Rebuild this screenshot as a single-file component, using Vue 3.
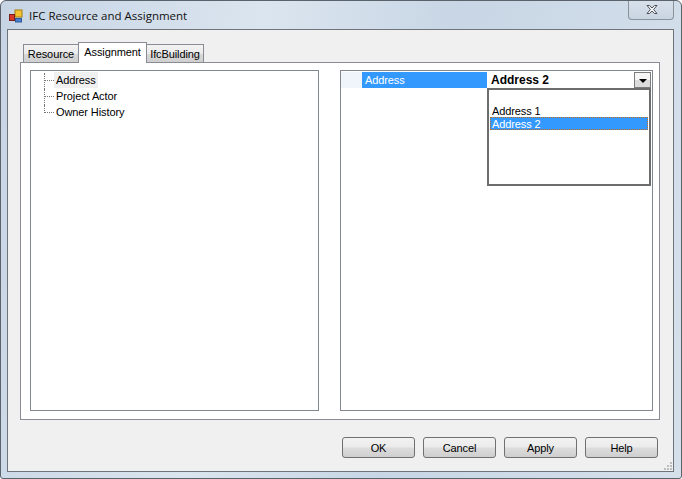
<script setup>
const tabs = [
  { name: 'Resource', w: 55, active: false },
  { name: 'Assignment', w: 69, active: true },
  { name: 'IfcBuilding', w: 58, active: false }
]
const tree = ['Address', 'Project Actor', 'Owner History']
const buttons = ['OK', 'Cancel', 'Apply', 'Help']
</script>

<template>
  <div class="window">
    <header class="titlebar">
      <svg class="appicon" width="14" height="14" viewBox="0 0 14 14">
        <rect x="6" y="1" width="7" height="7" fill="#f4c430" stroke="#a67c10" />
        <rect x="0.5" y="5.5" width="5" height="6" fill="#d83a2a" stroke="#7a2018" />
        <rect x="6.5" y="9.5" width="6" height="3.5" fill="#4a80d0" stroke="#2c5a9c" />
      </svg>
      <span class="title">IFC Resource and Assignment</span>
      <button class="close" aria-label="Close">
        <svg width="14" height="11" viewBox="0 0 14 11">
          <path d="M2 1.5h2.6L7 4l2.4-2.5H12L8.6 5.5 12 9.5H9.4L7 7 4.6 9.5H2l3.4-4z" fill="#f4f6f8" stroke="#4a5058" stroke-width="1" />
        </svg>
      </button>
    </header>

    <main class="client">
      <nav class="tabs">
        <div
          v-for="t in tabs"
          :key="t.name"
          class="tab"
          :class="{ active: t.active }"
          :style="{ width: t.w + 'px' }"
        >{{ t.name }}</div>
      </nav>

      <section class="panel">
        <div class="box tree">
          <div v-for="(n, i) in tree" :key="n" class="node" :class="{ last: i === tree.length - 1 }">
            <span class="line"></span>
            <span class="label" :class="{ sel: i === 0 }">{{ n }}</span>
          </div>
        </div>

        <div class="box grid">
          <div class="row">
            <span class="gutter"></span>
            <span class="key">Address</span>
            <span class="value">Address 2</span>
            <button class="drop" aria-label="Open"><i class="arrow"></i></button>
          </div>
          <div class="dropdown">
            <div class="item">Address 1</div>
            <div class="item chosen">Address 2</div>
          </div>
        </div>
      </section>

      <footer class="footer">
        <button v-for="b in buttons" :key="b" class="btn">{{ b }}</button>
      </footer>
      <svg class="grip" width="9" height="10" viewBox="0 0 9 10">
        <g fill="#bdbdbd">
          <rect x="6" y="1" width="2" height="2" /><rect x="3" y="4" width="2" height="2" /><rect x="6" y="4" width="2" height="2" />
          <rect x="0" y="7" width="2" height="2" /><rect x="3" y="7" width="2" height="2" /><rect x="6" y="7" width="2" height="2" />
        </g>
      </svg>
    </main>
  </div>
</template>

<style>
html, body { margin: 0; background: #fff; }
</style>

<style scoped>
.window {
  width: 682px;
  height: 479px;
  box-sizing: border-box;
  border: 1px solid #5a626c;
  border-radius: 6px 6px 3px 3px;
  background: linear-gradient(100deg, #c6d4e4 0%, #dbe5ef 35%, #c8d6e5 60%, #d5e0eb 100%);
  padding: 0 7px 6px 6px;
  display: flex;
  flex-direction: column;
  font-family: "Liberation Sans", Arial, sans-serif;
  font-size: 11px;
  letter-spacing: -0.1px;
  color: #000;
  overflow: hidden;
}
.titlebar {
  height: 28px;
  flex: none;
  display: flex;
  align-items: center;
  padding-left: 2px;
  position: relative;
}
.appicon { margin-right: 6px; margin-top: 2px; }
.title {
  font-family: "Open Sans", sans-serif;
  font-size: 11.5px;
  letter-spacing: 0;
  color: #111;
  margin-top: 1px;
}
.close {
  position: absolute;
  right: 0;
  top: -1px;
  width: 46px;
  height: 20px;
  padding: 0 0 0 2px;
  border: 1px solid #8a929c;
  border-top: none;
  border-radius: 0 0 4px 4px;
  background: linear-gradient(#d8e1ea, #c9d5e1);
  display: flex;
  align-items: center;
  justify-content: center;
}
.client {
  flex: 1;
  min-height: 0;
  border: 1px solid #6f747b;
  background: #f0f0f0;
  padding: 12px 13px 0 12px;
  display: flex;
  flex-direction: column;
  position: relative;
}
.tabs {
  display: flex;
  align-items: flex-end;
  height: 20px;
  padding-left: 3px;
  flex: none;
  position: relative;
  z-index: 1;
}
.tab {
  height: 18px;
  box-sizing: border-box;
  border: 1px solid #898c95;
  border-bottom: none;
  border-right: none;
  background: linear-gradient(#f3f3f3 0%, #ebebeb 50%, #d8d8d8 55%, #cfcfcf 100%);
  display: flex;
  align-items: center;
  justify-content: center;
  padding-top: 1px;
}
.tab:last-child { border-right: 1px solid #898c95; }
.tab.active {
  height: 21px;
  background: #fff;
  border-right: 1px solid #898c95;
  padding: 0 0 3px;
  margin-right: -1px;
  margin-bottom: -1px;
  position: relative;
  z-index: 1;
}
.panel {
  flex: 1;
  min-height: 0;
  box-sizing: border-box;
  background: #fff;
  border: 1px solid #898c95;
  padding: 7px 6px 8px 9px;
  display: flex;
  gap: 21px;
}
.box {
  border: 1px solid #828790;
  box-sizing: border-box;
  background: #fff;
}
.tree {
  width: 289px;
  padding: 1px 0 0 13px;
}
.node {
  height: 16px;
  display: flex;
  align-items: center;
  position: relative;
}
.line {
  width: 10px;
  height: 0;
  border-top: 1px dotted #777;
  position: relative;
}
.line::before {
  content: "";
  position: absolute;
  left: 0;
  top: -8px;
  height: 16px;
  border-left: 1px dotted #777;
}
.last .line::before { height: 8px; }
.label { padding: 0 2px; line-height: 16px; }
.label.sel { background: #f0f0f0; }
.grid {
  flex: 1;
  position: relative;
}
.row {
  display: flex;
  height: 16px;
  margin-top: 1px;
  line-height: 16px;
  position: relative;
}
.gutter {
  width: 21px;
  background: #f0f5fb;
}
.key {
  width: 125px;
  background: #3399ff;
  color: #fff;
  padding-left: 3px;
  box-sizing: border-box;
}
.value {
  font-weight: 700;
  font-size: 12px;
  letter-spacing: 0;
  padding-left: 4px;
  flex: 1;
}
.drop {
  position: absolute;
  right: 1px;
  top: 0;
  width: 17px;
  height: 16px;
  padding: 0;
  border: 1px solid #7c7c7c;
  background: linear-gradient(#f6f6f6 50%, #dcdcdc 50%);
  display: flex;
  align-items: center;
  justify-content: center;
}
.arrow {
  width: 0;
  height: 0;
  border-left: 4px solid transparent;
  border-right: 4px solid transparent;
  border-top: 4px solid #000;
  margin-top: 2px;
}
.dropdown {
  position: absolute;
  left: 146px;
  top: 17px;
  width: 164px;
  height: 98px;
  box-sizing: border-box;
  border: 2px solid #6d6d6d;
  background: #fff;
  padding: 14px 1px 0;
}
.item {
  height: 13px;
  line-height: 15px;
  padding-left: 2px;
}
.chosen {
  background: #3399ff;
  color: #fff;
  outline: 1px dotted #c56a1a;
  outline-offset: -1px;
}
.footer {
  height: 51px;
  flex: none;
  display: flex;
  justify-content: flex-end;
  gap: 8px;
  padding: 17px 2px 0 0;
  box-sizing: border-box;
}
.btn {
  width: 73px;
  height: 21px;
  padding: 0;
  border: 1px solid #707070;
  border-radius: 3px;
  background: linear-gradient(#f2f2f2 0%, #ebebeb 48%, #dddddd 52%, #cfcfcf 100%);
  font: inherit;
  letter-spacing: inherit;
  color: #000;
}
.grip {
  position: absolute;
  right: 0;
  bottom: 0;
}
</style>
